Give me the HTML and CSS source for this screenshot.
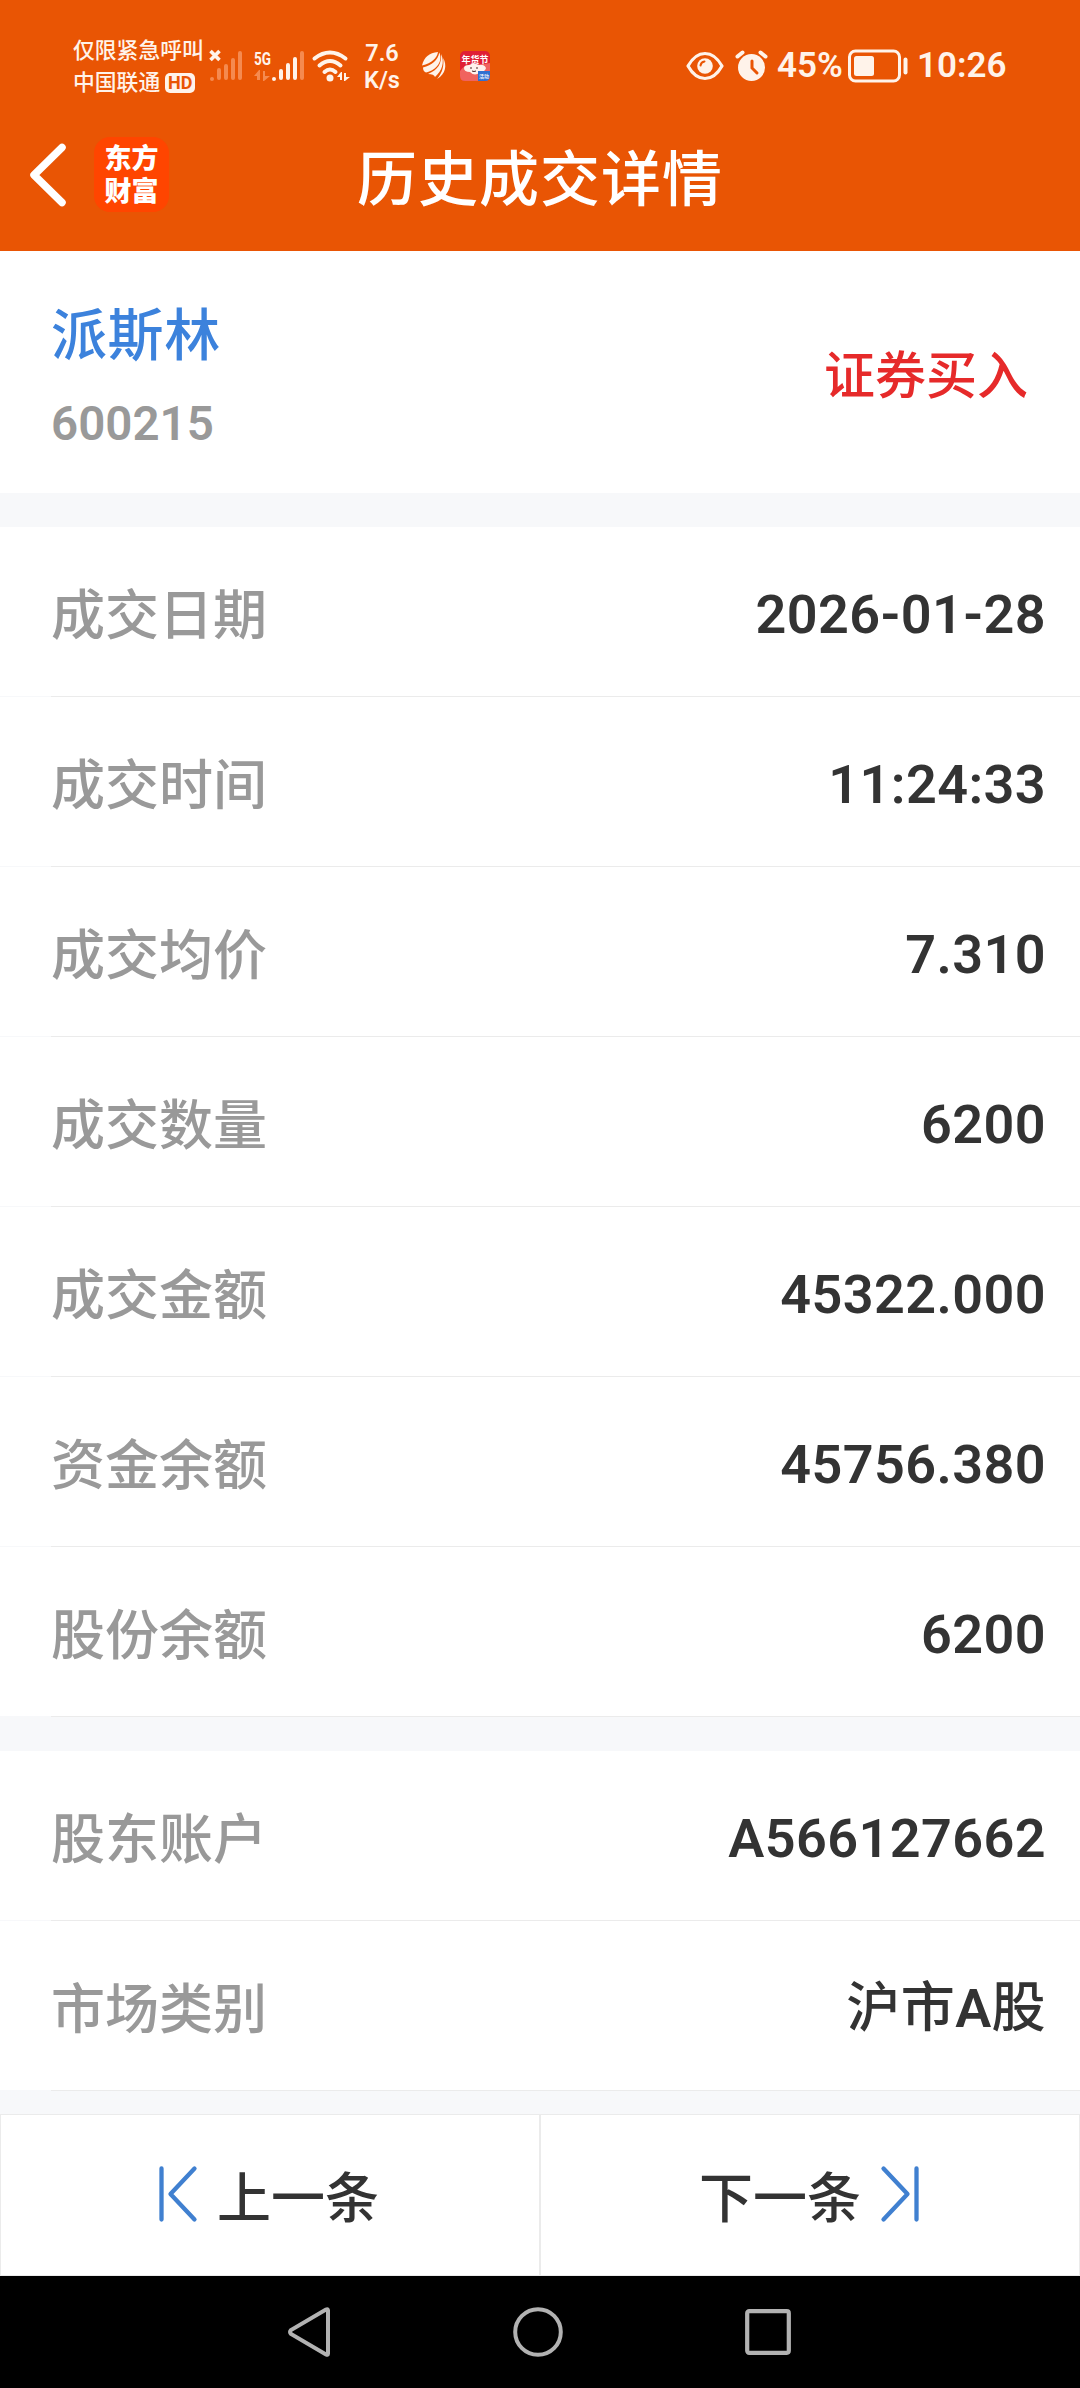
FILE: index.html
```
<!DOCTYPE html>
<html lang="zh-CN">
<head>
    <meta charset="UTF-8">
    <meta name="viewport" content="width=device-width, initial-scale=1.0">
    <title>历史成交详情</title>
    <link rel="stylesheet" href="styles.css">
</head>
<body>
    <header class="top">
        <div class="status-bar">
            <div class="carrier">
                <div>仅限紧急呼叫</div>
                <div class="carrier-row">中国联通<span class="hd">HD</span></div>
            </div>
            <svg class="signals" width="96" height="34" viewBox="0 0 96 34">
                <path d="M1.500 2l9 9M10.500 2l-9 9" stroke="#fff3ea" stroke-width="3.600"/>
                <g stroke="#f58a50" stroke-width="4" stroke-linecap="round">
                    <path d="M3 30v0M10 29v-8M17 29V17M24 29V11M31 29V4M93 29V4"/>
                </g>
                <g stroke="#fff3ea" stroke-width="4" stroke-linecap="round">
                    <path d="M65 30v0M72 29v-7M79 29V16M86 29V10"/>
                </g>
                <text class="net" x="45" y="16" textLength="17" lengthAdjust="spacingAndGlyphs">5G</text>
                <path d="M51 21v10h-3v-4h-3l5-6zM54 32V22h2v5h5l-6 5z" fill="#f58a50"/>
            </svg>
            <svg class="wifi" width="38" height="34" viewBox="0 0 38 34">
                <g fill="none" stroke="#fff3ea" stroke-width="4" stroke-linecap="round">
                    <path d="M2.500 9.500q15.500-12 31 0M7.500 16.500q10.500-9 21 0M12.500 23q5.500-5 11 0"/>
                </g>
                <circle cx="18" cy="29" r="3.500" fill="#fff3ea"/>
                <path d="M30 23v8h-2v-3h-3l4-5zM32 32v-8h2v4h4l-5 4z" fill="#fff3ea"/>
            </svg>
            <div class="speed">
                <div>7.6</div>
                <div>K/s</div>
            </div>
            <svg class="feather" width="26" height="30" viewBox="0 0 26 30">
                <g fill="#fff3ea">
                    <path d="M1 14.500C3 6 8 2 17 1c-1 6-6 11-16 13.500z"/>
                    <path d="M2 16.500C11 14 17 9 18.300 1.500 22 10 16 19 5 21.500q-3-1-3-5z"/>
                    <path d="M7 23C17 19 21 12 20 3c4 8 1 17-6 23q-1-3-7-3z"/>
                    <path d="M16 28c6-7 7-14 6.200-21C26 14 25 23 16 28z"/>
                </g>
            </svg>
            <svg class="festival" width="30" height="30" viewBox="0 0 30 30">
                <rect width="30" height="30" rx="5" fill="#e01f35"/>
                <path d="M0 20q4-6 10-5l20-3v13q0 5-5 5H5q-5 0-5-5z" fill="#f0635e"/>
                <path d="M4 17q0-3 5-3 5-3 10 0 5-1 7 3-1 4-6 4-5 5-10 0-6 0-6-4z" fill="#fff1ec"/>
                <path d="M10 17h2M16 17h2M12 20q2 1 4 0" fill="none" stroke="#4a2626" stroke-width="1"/>
                <text class="festival-text" x="15" y="12" text-anchor="middle">年货节</text>
                <path d="M18 20h12v5q0 5-5 5h-7z" fill="#2f6fd0"/>
                <text class="festival-tag" x="24" y="27" text-anchor="middle">活动</text>
            </svg>
            <svg class="eye" width="38" height="30" viewBox="0 0 38 30">
                <path d="M2 15Q9 2.500 19 2.500T36 15Q29 27.500 19 27.500T2 15z" fill="none" stroke="#fff3ea" stroke-width="3.200" stroke-linejoin="round"/>
                <circle cx="19" cy="15" r="7.800" fill="#fff3ea"/>
                <path d="M14.500 14.500q.5-3.500 4-4" fill="none" stroke="#e95504" stroke-width="2" stroke-linecap="round"/>
            </svg>
            <svg class="alarm" width="33" height="32" viewBox="0 0 33 32">
                <circle cx="16.500" cy="17.500" r="13.500" fill="#fff3ea"/>
                <path d="M2.500 6.500l5-4M30.500 6.500l-5-4" stroke="#fff3ea" stroke-width="4" stroke-linecap="round"/>
                <path d="M17 11v7l5 5" fill="none" stroke="#e95504" stroke-width="3" stroke-linecap="round"/>
            </svg>
            <div class="status-text percent">45%</div>
            <svg class="battery" width="60" height="34" viewBox="0 0 60 34">
                <rect x="1.500" y="2" width="50" height="30" rx="6" fill="none" stroke="#fff3ea" stroke-width="3"/>
                <rect x="6" y="7" width="20" height="20" rx="2.500" fill="#fff3ea"/>
                <rect x="55.500" y="8.500" width="4" height="17" rx="2" fill="#fff3ea"/>
            </svg>
            <div class="status-text">10:26</div>
        </div>
        <div class="title-bar">
            <svg class="back" width="38" height="64" viewBox="0 0 38 64">
                <path d="M33 4.500L5 32l28 27.500" fill="none" stroke="#fff" stroke-width="7.500" stroke-linecap="round" stroke-linejoin="round"/>
            </svg>
            <div class="logo">东方<br>财富</div>
            <h1 class="title">历史成交详情</h1>
        </div>
    </header>

    <section class="stock">
        <div>
            <div class="stock-name">派斯林</div>
            <div class="stock-code">600215</div>
        </div>
        <div class="trade-type">证券买入</div>
    </section>

    <section class="list">
        <div class="row"><span class="label">成交日期</span><span class="value">2026-01-28</span></div>
        <div class="row"><span class="label">成交时间</span><span class="value">11:24:33</span></div>
        <div class="row"><span class="label">成交均价</span><span class="value">7.310</span></div>
        <div class="row"><span class="label">成交数量</span><span class="value">6200</span></div>
        <div class="row"><span class="label">成交金额</span><span class="value">45322.000</span></div>
        <div class="row"><span class="label">资金余额</span><span class="value">45756.380</span></div>
        <div class="row"><span class="label">股份余额</span><span class="value">6200</span></div>
    </section>

    <section class="list">
        <div class="row"><span class="label">股东账户</span><span class="value">A566127662</span></div>
        <div class="row"><span class="label">市场类别</span><span class="value"><span class="cjk">沪市</span>A<span class="cjk">股</span></span></div>
    </section>

    <div class="pager">
        <div class="page-btn">
            <svg width="38" height="56" viewBox="0 0 38 56">
                <path d="M2.500 2.500v51M35.500 2.500L11.500 28l24 25.500" fill="none" stroke="#4080d0" stroke-width="4.300" stroke-linecap="round" stroke-linejoin="round"/>
            </svg>
            <span>上一条</span>
        </div>
        <div class="page-btn">
            <span>下一条</span>
            <svg width="38" height="56" viewBox="0 0 38 56">
                <path d="M35.500 2.500v51M2.500 2.500l24 25.500-24 25.500" fill="none" stroke="#4080d0" stroke-width="4.300" stroke-linecap="round" stroke-linejoin="round"/>
            </svg>
        </div>
    </div>

    <nav class="nav">
        <svg width="44" height="52" viewBox="0 0 44 52">
            <path d="M41 4.500v43q0 2-2 1L4 28q-2-2 0-4L39 3.500q2-1 2 1z" fill="none" stroke="#b2b2b2" stroke-width="4"/>
        </svg>
        <svg width="50" height="50" viewBox="0 0 50 50">
            <circle cx="25" cy="25" r="22.800" fill="none" stroke="#b2b2b2" stroke-width="4"/>
        </svg>
        <svg width="46" height="46" viewBox="0 0 46 46">
            <rect x="2.200" y="2.200" width="41.600" height="41.600" rx="2" fill="none" stroke="#b2b2b2" stroke-width="4.200"/>
        </svg>
    </nav>
</body>
</html>
```

FILE: styles.css
```
* {
    box-sizing: border-box;
}
body {
    margin: 0;
    width: 1080px;
    height: 2388px;
    display: flex;
    flex-direction: column;
    background: #f7f8fa;
    color: #333;
    font-family: Roboto, "Noto Sans CJK SC", sans-serif;
    font-weight: 500;
    overflow: hidden;
}
svg {
    display: block;
    flex: none;
    overflow: visible;
}
.top {
    height: 251px;
    background: #e95504;
    color: #fff;
}
.status-bar {
    display: flex;
    align-items: center;
    height: 104px;
    padding: 27px 0 0 73px;
    color: #fff3ea;
    white-space: nowrap;
}
.carrier {
    width: 136px;
    padding-top: 2px;
    font-size: 21.8px;
    line-height: 32px;
}
.carrier-row {
    display: flex;
    align-items: center;
}
.hd {
    margin-left: 5px;
    width: 30px;
    height: 20px;
    border-radius: 5px;
    background: #fff3ea;
    color: #e95504;
    font-size: 18px;
    font-weight: 700;
    line-height: 20px;
    text-align: center;
}
.net {
    fill: #fff3ea;
    font-size: 19px;
    font-weight: 700;
}
.wifi {
    margin-left: 7px;
}
.speed {
    width: 40px;
    margin-left: 12px;
    padding-top: 2px;
    font-size: 23.5px;
    font-weight: 600;
    line-height: 27px;
    text-align: center;
}
.feather {
    margin-left: 19px;
}
.festival {
    margin-left: 13px;
}
.festival-text {
    fill: #fff;
    font-size: 9px;
    font-weight: 700;
}
.festival-tag {
    fill: #fff;
    font-size: 5px;
}
.eye {
    margin-left: 196px;
}
.alarm {
    margin-left: 11px;
}
.status-text {
    padding-top: 1px;
    font-size: 35px;
    font-weight: 600;
    line-height: 40px;
}
.percent {
    width: 71px;
    margin-left: 9px;
}
.battery {
    margin-right: 9px;
}
.title-bar {
    position: relative;
    display: flex;
    align-items: center;
    height: 141px;
    padding-left: 29px;
}
.logo {
    width: 75px;
    height: 75px;
    margin-left: 27px;
    padding-top: 3px;
    border-radius: 16px;
    background: #ff4500;
    font-family: "Noto Sans CJK SC", sans-serif;
    font-size: 27px;
    font-weight: 900;
    line-height: 33px;
    text-align: center;
}
.title {
    position: absolute;
    top: 32px;
    left: 180px;
    right: 180px;
    margin: 0;
    font-size: 60px;
    font-weight: 500;
    letter-spacing: 1px;
    line-height: 90px;
    text-align: center;
}
.stock {
    display: flex;
    justify-content: space-between;
    align-items: center;
    height: 242px;
    margin-bottom: 34px;
    padding: 15px 52px 0 51px;
    background: #fff;
}
.stock-name {
    color: #3c82dc;
    font-size: 56px;
    letter-spacing: 0.6px;
    line-height: 88px;
}
.stock-code {
    color: #999;
    font-size: 47.5px;
    font-weight: 600;
    line-height: 88px;
}
.trade-type {
    margin-top: -6px;
    color: #e62a2a;
    font-size: 51px;
    line-height: 76px;
}
.list {
    margin-bottom: 34px;
    background: #fff;
}
.row {
    display: flex;
    justify-content: space-between;
    align-items: center;
    height: 170px;
    padding: 5px 34px 0 51px;
    /* the divider fades out under the left padding */
    background: linear-gradient(to right, #f7f8fa 51px, #ebebeb 51px) bottom / 100% 1px no-repeat;
}
.label,
.value {
    font-size: 54px;
    line-height: 80px;
}
.label {
    padding-top: 4px;
    color: #999;
}
.value {
    font-weight: 600;
    letter-spacing: 0.4px;
}
.cjk {
    font-weight: 500;
}
.list + .list {
    margin-bottom: 23px;
}
.pager {
    display: flex;
    height: 162px;
}
.page-btn {
    flex: 1;
    display: flex;
    justify-content: center;
    align-items: center;
    gap: 20px;
    padding: 0 2px 2px 0;
    border: 1px solid #ebebeb;
    background: #fff;
    font-size: 54px;
}
.nav {
    display: flex;
    justify-content: center;
    align-items: center;
    gap: 182px;
    height: 112px;
    padding-right: 2px;
    background: #000;
}
```
